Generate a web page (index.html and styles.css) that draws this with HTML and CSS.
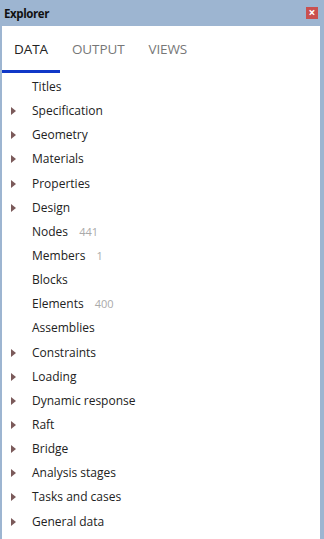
FILE: index.html
```html
<html>
  <head>
    <title>Explorer</title>
    <meta name="viewport" content="width=device-width, initial-scale=1.0" />
    <link rel="stylesheet" href="styles.css">
  </head>
  <body>
    <div class="window">
      <div class="titlebar">
        <span class="title">Explorer</span>
        <span class="close">&#215;</span>
      </div>
      <div class="panel">
        <div class="tabs">
          <div class="tab active">DATA</div>
          <div class="tab">OUTPUT</div>
          <div class="tab">VIEWS</div>
        </div>
        <ul class="tree">
          <li class="leaf">Titles</li>
          <li class="node">Specification</li>
          <li class="node">Geometry</li>
          <li class="node">Materials</li>
          <li class="node">Properties</li>
          <li class="node">Design</li>
          <li class="leaf">Nodes <span class="count">441</span></li>
          <li class="leaf">Members <span class="count">1</span></li>
          <li class="leaf">Blocks</li>
          <li class="leaf">Elements <span class="count">400</span></li>
          <li class="leaf">Assemblies</li>
          <li class="node">Constraints</li>
          <li class="node">Loading</li>
          <li class="node">Dynamic response</li>
          <li class="node">Raft</li>
          <li class="node">Bridge</li>
          <li class="node">Analysis stages</li>
          <li class="node">Tasks and cases</li>
          <li class="node">General data</li>
        </ul>
      </div>
    </div>
  </body>
</html>
```

FILE: styles.css
```css
body {
  margin: 0;
  background: #9db5d1;
  font-family: "Open Sans", "Noto Sans", sans-serif;
}
.window {
  height: 539px;
  display: flex;
  flex-direction: column;
  background: #9db5d1;
}
.titlebar {
  height: 26px;
  display: flex;
  align-items: center;
  justify-content: space-between;
  padding: 0 6px 0 4px;
}
.title {
  font-size: 11.5px;
  font-weight: bold;
  color: #111;
  letter-spacing: -0.4px;
}
.close {
  width: 12px;
  height: 12px;
  background: #c9504f;
  color: #fff;
  font-size: 12px;
  line-height: 11px;
  text-align: center;
  font-weight: bold;
}
.panel {
  flex: 1;
  background: #fff;
  margin: 0 4px 0 2px;
}
.tabs {
  display: flex;
  height: 47px;
}
.tab {
  font-size: 13.5px;
  color: #777;
  padding: 14px 12px 0;
  letter-spacing: -0.1px;
}
.tab.active {
  color: #222;
  border-bottom: 3px solid #1038c8;
  height: 30px;
}
.tree {
  list-style: none;
  margin: 2px 0 0;
  padding: 0;
}
.tree li {
  height: 24.15px;
  line-height: 24px;
  font-size: 12px;
  color: #222;
  padding-left: 30px;
  position: relative;
}
.tree li.node::before {
  content: "";
  position: absolute;
  left: 9px;
  top: 8px;
  border-left: 5px solid #7b5a5a;
  border-top: 4px solid transparent;
  border-bottom: 4px solid transparent;
}
.count {
  font-size: 11px;
  color: #aaa;
  margin-left: 8px;
}
```
